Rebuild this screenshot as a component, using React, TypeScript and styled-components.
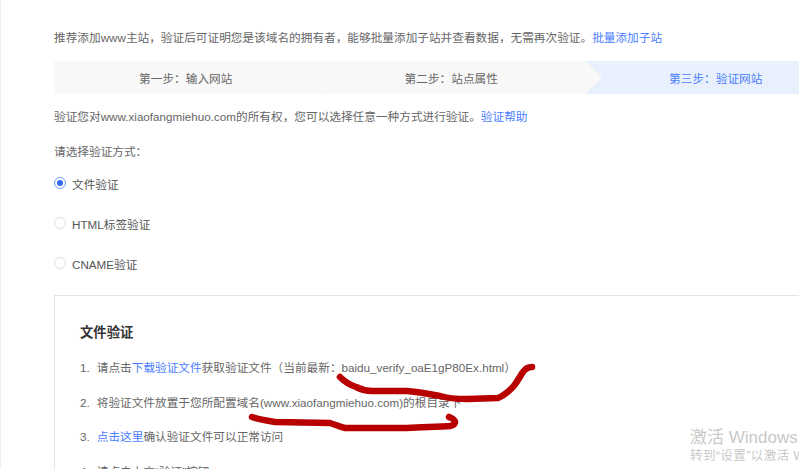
import React from "react";
import styled, { createGlobalStyle } from "styled-components";

const Global = createGlobalStyle`
  html, body { margin: 0; padding: 0; background: #fff; overflow: hidden; }
  body { font-family: "Liberation Sans", "Noto Sans CJK SC", sans-serif; font-size: 11.67px; color: #666; }
`;

const Page = styled.div`
  position: relative;
  width: 799px;
  height: 469px;
  overflow: hidden;
  border-left: 1px solid #eee;
  box-sizing: border-box;
  padding: 30px 0 0 53px;
`;

const Line = styled.p`
  margin: 0;
  height: 16px;
  line-height: 16px;
  white-space: nowrap;
`;

const Prompt = styled(Line)`
  margin-top: 19px;
`;

const Link = styled.a`
  color: #4a7dff;
  text-decoration: none;
`;

const Steps = styled.div`
  display: flex;
  width: 800px;
  height: 33px;
  margin: 15px 0 15px;
`;

const Step = styled.div<{ $active?: boolean }>`
  position: relative;
  flex: 0 0 265.5px;
  box-sizing: border-box;
  padding-right: ${(p) => (p.$active ? "4px" : "2px")};
  display: flex;
  align-items: center;
  justify-content: center;
  background: ${(p) => (p.$active ? "#e9f0fd" : "#f8f8f8")};
  color: ${(p) => (p.$active ? "#4a7dff" : "#666")};
`;

const Chevron = styled.svg`
  position: absolute;
  top: 0;
  right: -17px;
  z-index: 1;
  width: 17px;
  height: 33px;
`;

const Methods = styled.div`
  display: flex;
  flex-direction: column;
  gap: 24px;
  margin: 15px 0 24px;
`;

const Method = styled.label`
  display: flex;
  align-items: center;
  gap: 6px;
  height: 16px;
  color: #555;
`;

const Radio = styled.span<{ $checked?: boolean }>`
  box-sizing: border-box;
  width: 12px;
  height: 12px;
  border-radius: 50%;
  border: 1px solid ${(p) => (p.$checked ? "#6f9bff" : "#dedede")};
  display: flex;
  align-items: center;
  justify-content: center;
  &::after {
    content: "";
    display: ${(p) => (p.$checked ? "block" : "none")};
    width: 6px;
    height: 6px;
    border-radius: 50%;
    background: #2f6bf0;
  }
`;

const Panel = styled.section`
  width: 800px;
  height: 240px;
  box-sizing: border-box;
  border: 1px solid #e2e2e2;
  padding: 27px 25px;
`;

const Title = styled.h3`
  margin: 0 0 17px;
  font-size: 13.33px;
  line-height: 20px;
  font-weight: 700;
  color: #333;
`;

const Instructions = styled.ol`
  margin: 0;
  padding: 0;
  list-style: none;
  display: flex;
  flex-direction: column;
  gap: 18.7px;
`;

const Instruction = styled.li`
  display: flex;
  gap: 7px;
  height: 16px;
  line-height: 16px;
  white-space: nowrap;
`;

const Scribble = styled.svg`
  position: absolute;
  left: -1px;
  top: 0;
  width: 799px;
  height: 469px;
  pointer-events: none;
`;

const Stroke = styled.path`
  fill: none;
  stroke: #b80000;
  stroke-width: 6.5;
  stroke-linecap: round;
  stroke-linejoin: round;
`;

const Watermark = styled.div`
  position: absolute;
  left: 689px;
  top: 427px;
  white-space: nowrap;
  color: #c9c9c9;
`;

const WatermarkTitle = styled.div`
  font-size: 17px;
  line-height: 21px;
`;

const WatermarkHint = styled.div`
  font-size: 12.5px;
  letter-spacing: 0.4px;
  line-height: 17px;
`;

const Arrow = ({ edge }: { edge: string }) => (
  <Chevron viewBox="0 0 17 33">
    <polygon points="0,0 16.5,16.5 0,33" fill="#f8f8f8" />
    <polyline points="0,0 16.5,16.5 0,33" fill="none" stroke={edge} strokeWidth="1" />
  </Chevron>
);

export default function App() {
  return (
    <>
      <Global />
      <Page>
        <Line>
          推荐添加www主站，验证后可证明您是该域名的拥有者，能够批量添加子站并查看数据，无需再次验证。<Link>批量添加子站</Link>
        </Line>
        <Steps>
          <Step>
            第一步：输入网站
            <Arrow edge="#ffffff" />
          </Step>
          <Step>
            第二步：站点属性
            <Arrow edge="#f8f8f8" />
          </Step>
          <Step $active>第三步：验证网站</Step>
        </Steps>
        <Line>
          验证您对www.xiaofangmiehuo.com的所有权，您可以选择任意一种方式进行验证。<Link>验证帮助</Link>
        </Line>
        <Prompt>请选择验证方式：</Prompt>
        <Methods>
          <Method>
            <Radio $checked />
            文件验证
          </Method>
          <Method>
            <Radio />
            HTML标签验证
          </Method>
          <Method>
            <Radio />
            CNAME验证
          </Method>
        </Methods>
        <Panel>
          <Title>文件验证</Title>
          <Instructions>
            <Instruction>
              <span>1.</span>
              <span>
                请点击<Link>下载验证文件</Link>获取验证文件（当前最新：baidu_verify_oaE1gP80Ex.html）
              </span>
            </Instruction>
            <Instruction>
              <span>2.</span>
              <span>将验证文件放置于您所配置域名(www.xiaofangmiehuo.com)的根目录下</span>
            </Instruction>
            <Instruction>
              <span>3.</span>
              <span>
                <Link>点击这里</Link>确认验证文件可以正常访问
              </span>
            </Instruction>
            <Instruction>
              <span>4.</span>
              <span>请点击上方“验证”按钮</span>
            </Instruction>
          </Instructions>
        </Panel>
        <Scribble viewBox="0 0 799 469">
          <Stroke d="M340 377 C345 382 350 385 356 387 C362 390 366 391 372 391 L407 391 C420 392 430 394 440 396 C450 399 458 399 467 399 L498 398 C505 395 509 391 513 387 C518 381 520 376 523 372 C525 369 528 367 532 367" />
          <Stroke d="M252 417 C260 420 268 421 275 422 L330 423 C336 425 340 427 345 428 L407 428 C425 427 440 427 450 426 C455 425 456 422 454 420 C453 418 451 418 449 417" />
        </Scribble>
        <Watermark>
          <WatermarkTitle>激活 Windows</WatermarkTitle>
          <WatermarkHint>转到“设置”以激活 Windows。</WatermarkHint>
        </Watermark>
      </Page>
    </>
  );
}
